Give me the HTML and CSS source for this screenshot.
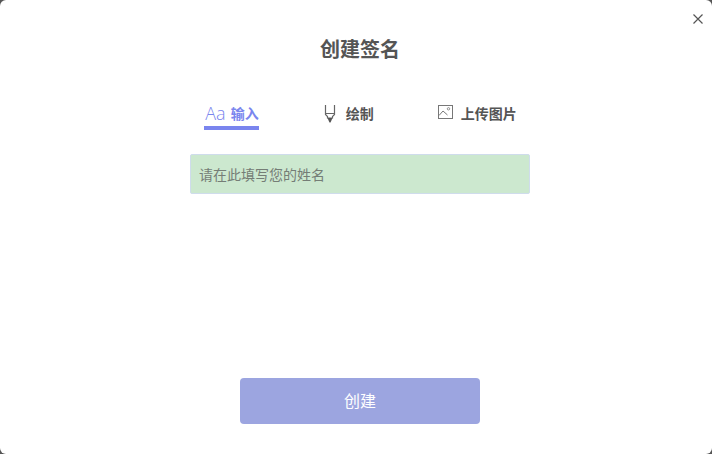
FILE: index.html
```html
<!DOCTYPE html>
<html lang="zh-CN">
<head>
    <meta charset="UTF-8">
    <title>创建签名</title>
    <link rel="stylesheet" href="styles.css">
</head>
<body>
    <div class="dialog">
        <button class="close" aria-label="关闭">
            <svg width="10" height="10" viewBox="0 0 10 10"><path d="M0.5 0.5L9.5 9.5M9.5 0.5L0.5 9.5" stroke="#555" stroke-width="1.2" fill="none"/></svg>
        </button>
        <h1 class="title">创建签名</h1>
        <div class="tabs">
            <div class="tab active">
                <span class="tab-aa">Aa</span>
                <span class="tab-label">输入</span>
            </div>
            <div class="tab tab-draw">
                <svg width="12" height="18" viewBox="0 0 12 18" fill="none">
                    <path d="M1.5 0V9.5L3.5 11.5V13H8.5V11.5L10.5 9.5V0M1.5 8.5H10.5" stroke="#666" stroke-width="1.2"/>
                    <path d="M3.5 13H8.5L6.5 17.5H5.5Z" fill="#555"/>
                </svg>
                <span class="tab-label">绘制</span>
            </div>
            <div class="tab tab-upload">
                <svg width="15" height="14" viewBox="0 0 15 14" fill="none">
                    <rect x="0.5" y="0.5" width="14" height="13" stroke="#777"/>
                    <path d="M1 10.5L5 6L9.5 10" stroke="#777"/>
                    <circle cx="10.5" cy="3.8" r="1.2" stroke="#777" stroke-width="0.8"/>
                </svg>
                <span class="tab-label">上传图片</span>
            </div>
        </div>
        <input class="name-input" type="text" placeholder="请在此填写您的姓名">
        <button class="create">创建</button>
    </div>
</body>
</html>
```

FILE: styles.css
```css
html, body {
    margin: 0;
    height: 100%;
    background: #555;
}
body {
    font-family: "Noto Sans CJK SC", "Liberation Sans", sans-serif;
}
.dialog {
    position: relative;
    box-sizing: border-box;
    height: 454px;
    background: #fff;
    border-radius: 6px;
    display: flex;
    flex-direction: column;
    align-items: center;
    padding: 35px 0 0 8px;
}
.close {
    position: absolute;
    top: 14px;
    right: 9px;
    padding: 0;
    border: none;
    background: none;
    display: flex;
    cursor: pointer;
}
.title {
    margin: 0;
    font-size: 20px;
    line-height: 28px;
    font-weight: 700;
    color: #555;
}
.tabs {
    display: flex;
    gap: 65px;
    margin: 37px 0 0 1px;
    height: 30px;
}
.tab {
    box-sizing: border-box;
    height: 30px;
    display: flex;
    align-items: center;
    gap: 10px;
    padding-bottom: 4px;
    color: #555;
}
.tab.active {
    color: #7a85ee;
    gap: 5px;
    border-bottom: 4px solid #7a85ee;
    padding: 0 0 0 1px;
    height: 30px;
}
.tab-draw svg {
    margin-top: 2px;
}
.tab-upload {
    gap: 8px;
    margin-left: -1px;
}
.tab-upload svg {
    margin-top: -3px;
}
.tab-aa {
    font-family: "Open Sans", "Liberation Sans", sans-serif;
    font-weight: 300;
    font-size: 18px;
    line-height: 20px;
}
.tab-label {
    font-size: 14px;
    line-height: 20px;
    font-weight: 700;
    margin-top: -1px;
}
.name-input {
    box-sizing: border-box;
    width: 340px;
    height: 40px;
    margin-top: 24px;
    padding: 0 8px;
    border: 1px solid #cfdcec;
    border-radius: 2px;
    background: #cce8cf;
    font-family: inherit;
    font-size: 14px;
    color: #555;
    outline: none;
}
.name-input::placeholder {
    color: #757d76;
    opacity: 1;
}
.create {
    width: 240px;
    height: 46px;
    margin-top: 184px;
    padding: 0 0 2px;
    border: none;
    border-radius: 4px;
    background: #9ca5e0;
    color: #fff;
    font-family: inherit;
    font-size: 16px;
    cursor: pointer;
}
```
